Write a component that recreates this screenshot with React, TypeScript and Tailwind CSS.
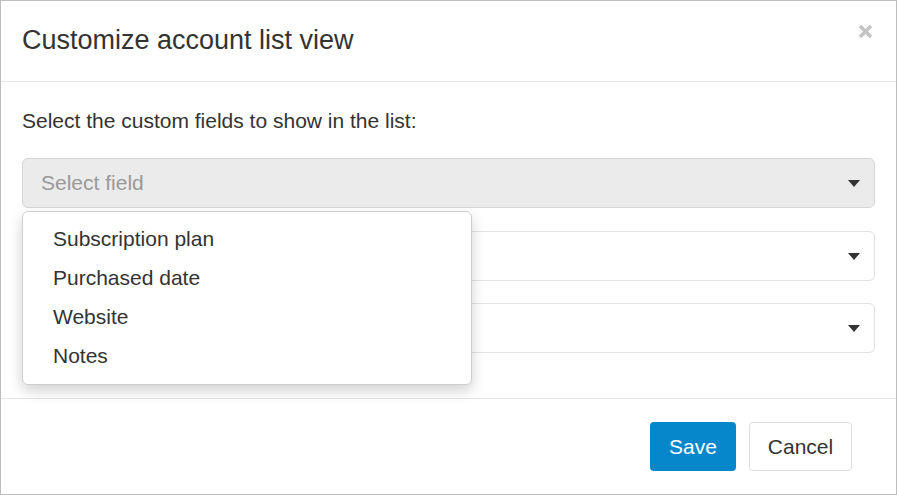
import React from "react";

const fields = ["Subscription plan", "Purchased date", "Website", "Notes"];

function Caret() {
  return (
    <svg width="12" height="7" viewBox="0 0 12 7" className="shrink-0">
      <path d="M0 0h12L6 7z" fill="#333" />
    </svg>
  );
}

function SelectBox({ active, placeholder }: { active?: boolean; placeholder?: string }) {
  return (
    <div
      className={`flex h-[50px] items-center justify-between rounded-[6px] border pl-[18px] pr-[14px] ${
        active ? "border-[#d6d6d6] bg-[#ebebeb]" : "border-[#e3e3e3] bg-white"
      }`}
    >
      <span className="text-[21px] text-[#999]">{placeholder}</span>
      <Caret />
    </div>
  );
}

export default function App() {
  return (
    <div
      className="flex h-[495px] w-[897px] flex-col border border-[#bdbdbd] bg-white text-[#333]"
      style={{ fontFamily: '"Liberation Sans", Arial, sans-serif' }}
    >
      {/* header */}
      <div className="flex h-[81px] shrink-0 items-center justify-between border-b border-[#e5e5e5] pl-[21px] pr-[23px]">
        <h1 className="mt-[-1px] text-[27px] leading-none text-[#333]">Customize account list view</h1>
        <button className="mt-[-19px] text-[#c4c4c4]">
          <svg width="15" height="15" viewBox="0 0 15 15">
            <path d="M2 2l11 11M13 2L2 13" stroke="currentColor" strokeWidth="3.6" />
          </svg>
        </button>
      </div>

      {/* body */}
      <div className="flex-1 px-[21px] pt-[24px]">
        <p className="text-[21px] leading-[30px]">Select the custom fields to show in the list:</p>
        <div className="relative mt-[22px]">
          <SelectBox active placeholder="Select field" />
          <div className="absolute left-0 top-[53px] z-10 w-[450px] rounded-[6px] border border-[#cfcfcf] bg-white pb-[9px] pt-[7px] shadow-[0_6px_14px_rgba(0,0,0,0.18)]">
            {fields.map((f) => (
              <div key={f} className="flex h-[39px] items-center pl-[30px] text-[21px] text-[#333]">
                {f}
              </div>
            ))}
          </div>
        </div>
        <div className="mt-[23px]">
          <SelectBox />
        </div>
        <div className="mt-[22px]">
          <SelectBox />
        </div>
      </div>

      {/* footer */}
      <div className="flex h-[96px] shrink-0 items-center justify-end gap-[13px] border-t border-[#e5e5e5] px-[44px]">
        <button className="h-[49px] w-[86px] rounded-[4px] bg-[#0787cb] text-[21px] text-white">Save</button>
        <button className="h-[49px] w-[103px] rounded-[4px] border border-[#dedede] bg-white text-[21px] text-[#333]">
          Cancel
        </button>
      </div>
    </div>
  );
}
